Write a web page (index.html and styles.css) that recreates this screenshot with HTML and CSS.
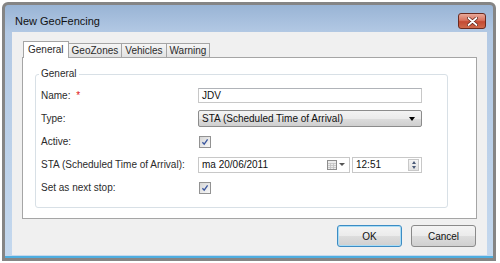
FILE: index.html
```html
<!DOCTYPE html>
<html lang="en">
<head>
    <meta charset="UTF-8">
    <meta name="viewport" content="width=device-width, initial-scale=1.0">
    <title>New GeoFencing</title>
    <link rel="stylesheet" href="styles.css">
</head>
<body>
    <div class="window">
        <div class="titlebar">
            <span class="title">New GeoFencing</span>
            <button class="close" title="Close">
                <svg width="11" height="9" viewBox="0 0 11 9">
                    <path d="M1.5 1 L9.5 8 M9.5 1 L1.5 8" stroke="#5a1e14" stroke-width="3.2" stroke-linecap="round"/>
                    <path d="M1.5 1 L9.5 8 M9.5 1 L1.5 8" stroke="#ffffff" stroke-width="1.8" stroke-linecap="round"/>
                </svg>
            </button>
        </div>

        <div class="client">
            <div class="tab-list">
                <span class="tab active">General</span>
                <span class="tab">GeoZones</span>
                <span class="tab">Vehicles</span>
                <span class="tab">Warning</span>
            </div>

            <div class="tab-panel">
                <fieldset class="group">
                    <legend>General</legend>
                    <div class="form">
                        <span class="label">Name: <span class="required">*</span></span>
                        <div class="textbox">JDV</div>

                        <span class="label">Type:</span>
                        <div class="combo">
                            <span>STA (Scheduled Time of Arrival)</span>
                            <span class="combo-arrow"></span>
                        </div>

                        <span class="label">Active:</span>
                        <div class="checkbox">
                            <svg width="10" height="10" viewBox="0 0 10 10">
                                <path d="M2.4 5.2 L4.2 7.2 L7.6 2.4" fill="none" stroke="#3a569e" stroke-width="1.3"/>
                            </svg>
                        </div>

                        <span class="label">STA (Scheduled Time of Arrival):</span>
                        <div class="datetime">
                            <div class="datebox">
                                <span>ma 20/06/2011</span>
                                <span class="date-tools">
                                    <svg width="10" height="10" viewBox="0 0 10 10">
                                        <rect x="0.5" y="0.5" width="9" height="9" fill="#ececec" stroke="#8d8d8d"/>
                                        <path d="M1 3.5 H9 M1 5.5 H9 M1 7.5 H9 M3.5 3 V9 M6.5 3 V9" stroke="#c2c2c2" stroke-width="0.8"/>
                                    </svg>
                                    <span class="mini-arrow"></span>
                                </span>
                            </div>
                            <div class="timebox">
                                <span>12:51</span>
                                <span class="spin">
                                    <span class="spin-up"></span>
                                    <span class="spin-down"></span>
                                </span>
                            </div>
                        </div>

                        <span class="label">Set as next stop:</span>
                        <div class="checkbox">
                            <svg width="10" height="10" viewBox="0 0 10 10">
                                <path d="M2.4 5.2 L4.2 7.2 L7.6 2.4" fill="none" stroke="#3a569e" stroke-width="1.3"/>
                            </svg>
                        </div>
                    </div>
                </fieldset>
            </div>

            <div class="actions">
                <button class="btn default">OK</button>
                <button class="btn">Cancel</button>
            </div>
        </div>
    </div>
</body>
</html>
```

FILE: styles.css
```css
* {
    box-sizing: border-box;
}

body {
    margin: 0;
    background-color: #ffffff;
    font-family: "Liberation Sans", Arial, sans-serif;
    font-size: 10px;
    color: #2b2b2b;
}

.window {
    width: 494px;
    height: 259px;
    margin: 2px 0 0 2px;
    border: 3px solid #858585;
    border-radius: 6px 6px 0 0;
    padding: 0 6px 3px 7px;
    background: linear-gradient(to bottom, #99b4d5 0px, #b3c9e4 28px, #c4d8ee 100%);
    box-shadow: inset 0 -2px 0 #4eaee0;
    display: flex;
    flex-direction: column;
}

.titlebar {
    height: 27px;
    display: flex;
    justify-content: space-between;
    align-items: flex-start;
}

.title {
    margin-top: 10px;
    padding-left: 3px;
    font-size: 11px;
    line-height: 13px;
    color: #111;
}

.close {
    width: 28px;
    height: 16px;
    margin-top: 8px;
    margin-right: 1px;
    padding: 0;
    border: 1px solid #6b2a1f;
    border-radius: 3px;
    background: linear-gradient(to bottom, #e9a99a 0%, #d9735f 45%, #c44a33 55%, #cf6a4c 100%);
    display: flex;
    align-items: center;
    justify-content: center;
}

.client {
    height: 223px;
    background-color: #f0f0f0;
    padding: 9px 10px 8px 10px;
    display: flex;
    flex-direction: column;
}

.tab-list {
    height: 16px;
    padding-left: 1px;
    display: flex;
    align-items: flex-end;
}

.tab {
    height: 14px;
    padding: 0 3px;
    margin-left: -1px;
    border: 1px solid #a5a5a5;
    border-bottom: none;
    background: linear-gradient(to bottom, #f5f5f5, #e2e2e2);
    line-height: 13px;
}

.tab.active {
    position: relative;
    height: 17px;
    margin-left: 0;
    margin-bottom: -1px;
    padding: 0 4px;
    background: #ffffff;
    line-height: 15px;
}

.tab.active + .tab {
    margin-left: 0;
    border-left: none;
}

.tab-panel {
    height: 162px;
    border: 1px solid #a5a5a5;
    background-color: #ffffff;
    padding: 10px 28px 10px 12px;
}

.group {
    margin: 0;
    padding: 4px 0 8px 3px;
    border: 1px solid #d8e0e6;
    border-radius: 3px;
}

.group legend {
    padding: 0 2px;
    line-height: 12px;
}

.form {
    padding-left: 2px;
    display: grid;
    grid-template-columns: 157px 224px;
    grid-auto-rows: 23px;
    align-items: center;
}

.required {
    margin-left: 3px;
    color: #e01010;
}

.textbox {
    height: 15px;
    padding: 0 3px;
    border: 1px solid #c8c8c8;
    border-top-color: #b0b3b8;
    background: #ffffff;
    line-height: 13px;
    color: #111;
}

.combo {
    height: 17px;
    padding: 0 6px 0 3px;
    border: 1px solid #8c8c8c;
    border-radius: 2px;
    background: linear-gradient(to bottom, #f3f3f3 0%, #ebebeb 50%, #dddddd 50%, #cfcfcf 100%);
    display: flex;
    align-items: center;
    justify-content: space-between;
    color: #111;
}

.combo-arrow {
    width: 0;
    height: 0;
    border-left: 3.5px solid transparent;
    border-right: 3.5px solid transparent;
    border-top: 4px solid #000;
}

.checkbox {
    width: 12px;
    height: 12px;
    margin-left: 1px;
    border: 1px solid #929292;
    background: linear-gradient(135deg, #d6d6d6, #f8f8f8);
    display: flex;
    align-items: center;
    justify-content: center;
}

.datetime {
    display: flex;
    gap: 2px;
}

.datebox,
.timebox {
    height: 16px;
    padding-left: 3px;
    border: 1px solid #c8c8c8;
    background: #ffffff;
    display: flex;
    align-items: center;
    justify-content: space-between;
    color: #111;
}

.datebox {
    width: 152px;
    padding-right: 4px;
}

.timebox {
    width: 70px;
    padding-right: 2px;
}

.date-tools {
    display: flex;
    align-items: center;
    gap: 2px;
}

.mini-arrow {
    width: 0;
    height: 0;
    border-left: 3px solid transparent;
    border-right: 3px solid transparent;
    border-top: 3px solid #555;
}

.spin {
    width: 11px;
    height: 12px;
    border: 1px solid #c8c8c8;
    background: linear-gradient(to bottom, #f4f4f4, #e2e2e2);
    display: flex;
    flex-direction: column;
    align-items: center;
    justify-content: space-around;
}

.spin-up,
.spin-down {
    width: 0;
    height: 0;
    border-left: 2.5px solid transparent;
    border-right: 2.5px solid transparent;
}

.spin-up {
    border-bottom: 3px solid #4a5a78;
}

.spin-down {
    border-top: 3px solid #4a5a78;
}

.actions {
    margin-top: 6px;
    padding-right: 1px;
    display: flex;
    justify-content: flex-end;
    gap: 9px;
}

.btn {
    width: 65px;
    height: 22px;
    padding: 0;
    border: 1px solid #8a8a8a;
    border-radius: 3px;
    background: linear-gradient(to bottom, #f4f4f4 0%, #ebebeb 50%, #dddddd 50%, #d0d0d0 100%);
    font-family: inherit;
    font-size: 10px;
    color: #111;
}

.btn.default {
    border-color: #3c8cc4;
    box-shadow: inset 0 0 0 1px #a9dcf5;
}
```
